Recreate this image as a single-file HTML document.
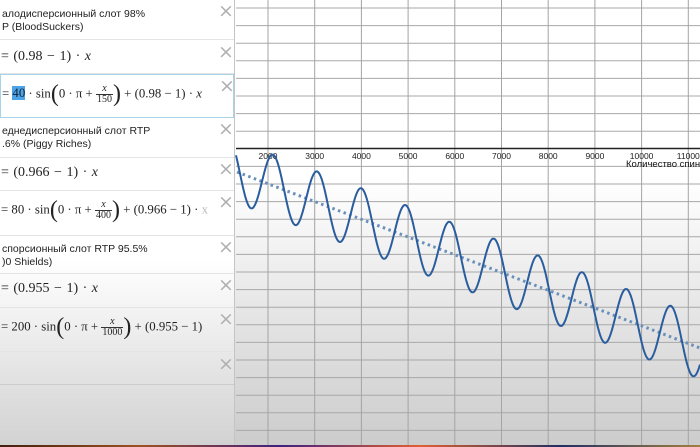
<!DOCTYPE html>
<html><head><meta charset="utf-8"><style>
*{margin:0;padding:0;box-sizing:border-box}
body{width:700px;height:447px;overflow:hidden;position:relative;font-family:"Liberation Sans",sans-serif;background:linear-gradient(#fff 0,#fff 180px,#cdcdcd 440px)}
#panel{position:absolute;left:0;top:0;width:235px;height:445px;background:linear-gradient(#fff 0,#fff 260px,#d2d2d2 445px);border-right:1px solid #c4c4c4}
.row{position:absolute;left:0;width:234px;border-bottom:1px solid #e4e4e4}
.t{position:absolute;left:2px;font-size:10.5px;color:#222;line-height:13px}
.f{position:absolute;left:1px;width:214px;overflow:hidden;font-family:"Liberation Serif",serif;font-size:14px;color:#222;white-space:nowrap;word-spacing:1px}
.s{font-size:12.8px;word-spacing:0}
.x{position:absolute;left:218px;font-size:19px;color:#b0b0b0;line-height:14px;font-family:"DejaVu Sans",sans-serif}
.fr{display:inline-block;vertical-align:middle;text-align:center;font-size:10px;line-height:10px;word-spacing:0}
.fr span{display:block;border-top:1px solid #333;padding:0 1px}
.big{font-size:24px;vertical-align:middle}
#bot{position:absolute;left:0;top:445px;width:700px;height:2px;background:linear-gradient(90deg,#402010,#a05020,#402080,#e06030,#203060,#a08040)}
</style></head><body>
<svg id="g" width="700" height="447" style="position:absolute;left:0;top:0"></svg>
<div id="panel">
<div class="row" style="top:0;height:40px"><div class="t" style="top:8px">алодисперсионный слот 98%<br>P (BloodSuckers)</div><div class="x" style="top:4px">×</div></div>
<div class="row" style="top:40px;height:34px"><div class="f" style="top:9px">= (0.98 − 1) · <i>x</i></div><div class="x" style="top:5px">×</div></div>
<div class="row" style="top:74px;height:44px;border:1px solid #a9d3e6"><div class="f s" style="top:6px">= <span style="background:#4da3e8;color:#123">40</span> · sin<span class="big">(</span>0 · π + <span class="fr"><i>x</i><span>150</span></span><span class="big">)</span> + (0.98 − 1) · <i>x</i></div><div class="x" style="top:4px">×</div></div>
<div class="row" style="top:118px;height:40px"><div class="t" style="top:7px">еднедисперсионный слот RTP<br>.6% (Piggy Riches)</div><div class="x" style="top:4px">×</div></div>
<div class="row" style="top:158px;height:33px"><div class="f" style="top:7px">= (0.966 − 1) · <i>x</i></div><div class="x" style="top:4px">×</div></div>
<div class="row" style="top:191px;height:45px"><div class="f s" style="top:6px">= 80 · sin<span class="big">(</span>0 · π + <span class="fr"><i>x</i><span>400</span></span><span class="big">)</span> + (0.966 − 1) · <span style="color:#bbb">x</span></div><div class="x" style="top:4px">×</div></div>
<div class="row" style="top:236px;height:38px"><div class="t" style="top:7px">спорсионный слот RTP 95.5%<br>)0 Shields)</div><div class="x" style="top:4px">×</div></div>
<div class="row" style="top:274px;height:34px"><div class="f" style="top:7px">= (0.955 − 1) · <i>x</i></div><div class="x" style="top:4px">×</div></div>
<div class="row" style="top:308px;height:44px"><div class="f s" style="top:6px">= 200 · sin<span class="big">(</span>0 · π + <span class="fr"><i>x</i><span>1000</span></span><span class="big">)</span> + (0.955 − 1)</div><div class="x" style="top:4px">×</div></div>
<div class="row" style="top:352px;height:33px;border-bottom-color:#ccc"><div class="x" style="top:5px">×</div></div>
</div>
<div id="bot"></div>
<script>
var s='';
for(var y=8;y<447;y+=17.6){if(Math.abs(y-148.4)<3)continue;s+='<line x1="236" x2="700" y1="'+y+'" y2="'+y+'" stroke="#a8a8a8" stroke-width="1"/>';}
for(var i=0;i<10;i++){var x=268+i*46.7;s+='<line x1="'+x+'" x2="'+x+'" y1="0" y2="447" stroke="#a4a4a4" stroke-width="1"/>';}
s+='<line x1="236" x2="700" y1="148.5" y2="148.5" stroke="#222" stroke-width="1.5"/>';
var labs=['2000','3000','4000','5000','6000','7000','8000','9000','10000','11000'];
for(var i=0;i<10;i++){s+='<text x="'+(268+i*46.7)+'" y="159" font-size="8.5" text-anchor="middle" fill="#222" font-family="Liberation Sans">'+labs[i]+'</text>';}
s+='<text x="626" y="167" font-size="9.5" fill="#111" font-family="Liberation Sans">Количество спин</text>';
var d='';for(var x=236;x<=700;x+=1){var y=172+0.38*(x-237)-31*Math.sin(2*Math.PI*(x-262)/44.2);d+=(x==236?'M':'L')+x+' '+y.toFixed(1);}
s+='<line x1="237" y1="172" x2="700" y2="348" stroke="#6a8fba" stroke-width="3" stroke-dasharray="2.5 3.5"/>';
s+='<path d="'+d+'" fill="none" stroke="#2a5d9e" stroke-width="2"/>';
document.getElementById('g').innerHTML=s;
</script>
</body></html>
